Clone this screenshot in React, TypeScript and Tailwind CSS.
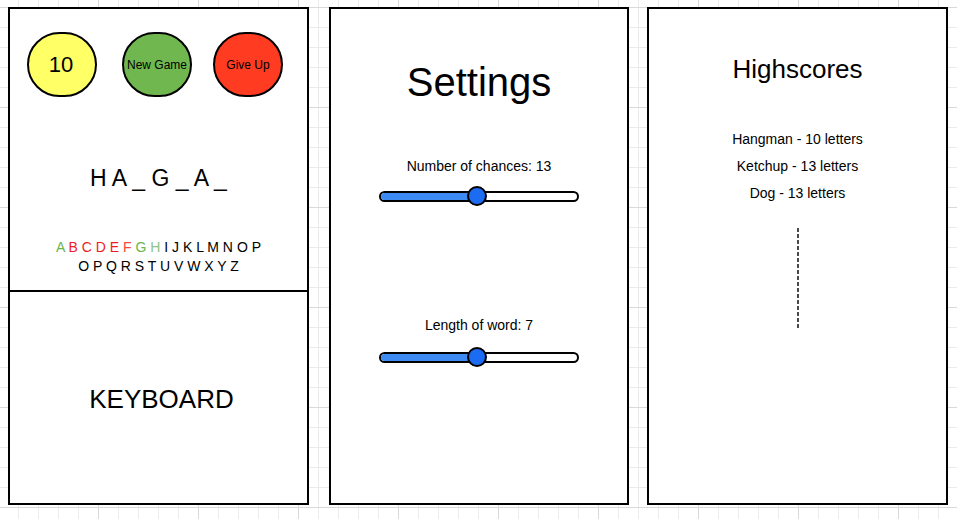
import React from 'react';

const alphabetTop = [
  { ch: 'A', color: 'text-[#6cb54b]' },
  { ch: 'B', color: 'text-[#ee1d23]' },
  { ch: 'C', color: 'text-[#ee1d23]' },
  { ch: 'D', color: 'text-[#ee1d23]' },
  { ch: 'E', color: 'text-[#ee1d23]' },
  { ch: 'F', color: 'text-[#f2473a]' },
  { ch: 'G', color: 'text-[#6cb54b]' },
  { ch: 'H', color: 'text-[#8fc28a]' },
  ...'IJKLMNOP'.split('').map((ch) => ({ ch, color: 'text-black' })),
];

const alphabetBottom = 'OPQRSTUVWXYZ'.split('');

const scores = ['Hangman - 10 letters', 'Ketchup - 13 letters', 'Dog - 13 letters'];

function Slider({ value }: { value: number }) {
  return (
    <div className="relative mx-auto h-[20px] w-[200px]">
      <div className="absolute left-0 right-0 top-[5px] h-[11px] overflow-hidden rounded-full border-2 border-black bg-white">
        <div className="h-full bg-[#3d8af3]" style={{ width: `${value}%` }} />
      </div>
      <div
        className="absolute top-0 h-[20px] w-[20px] -translate-x-1/2 rounded-full border-2 border-black bg-[#1c6cf3]"
        style={{ left: `${value}%` }}
      />
    </div>
  );
}

export default function App() {
  return (
    <div className="flex h-[519px] w-[957px] items-start overflow-hidden bg-white bg-[linear-gradient(to_right,#d9d9d9_1px,transparent_1px),linear-gradient(to_bottom,#d9d9d9_1px,transparent_1px),linear-gradient(to_right,#ebebeb_1px,transparent_1px),linear-gradient(to_bottom,#ebebeb_1px,transparent_1px)] bg-[size:100px_100px,100px_100px,20px_20px,20px_20px] bg-[position:98px_7px,98px_7px,18px_7px,18px_7px] font-['Liberation_Sans',Arial,sans-serif] text-black">
      {/* Game */}
      <div className="ml-[8px] mt-[7px] flex h-[498px] w-[301px] flex-col border-2 border-black bg-white">
        <div className="flex h-[283px] flex-col border-b-2 border-black">
          <div className="mt-[23px] flex">
            <div className="ml-[17px] flex h-[65px] w-[70px] items-center justify-center rounded-full border-2 border-black bg-[#ffff66] pr-[2px] text-[22px]">
              10
            </div>
            <div className="ml-[25px] flex h-[65px] w-[70px] items-center justify-center whitespace-nowrap rounded-full border-2 border-black bg-[#71b74f] text-[12px]">
              New Game
            </div>
            <div className="ml-[21px] flex h-[65px] w-[70px] items-center justify-center whitespace-nowrap rounded-full border-2 border-black bg-[#ff3b22] text-[12px]">
              Give Up
            </div>
          </div>
          <div className="mt-[67px] text-center text-[23px] leading-[28px]">H A _ G _ A _</div>
          <div className="mt-[46px] text-center text-[14px] leading-[19px]">
            <div>
              {alphabetTop.map((l, i) => (
                <span key={i} className={l.color}>
                  {l.ch}
                  {i < alphabetTop.length - 1 ? ' ' : ''}
                </span>
              ))}
            </div>
            <div>{alphabetBottom.join(' ')}</div>
          </div>
        </div>
        <div className="flex flex-1 items-center justify-center pl-[6px] pt-[4px] text-[26px]">KEYBOARD</div>
      </div>

      {/* Settings */}
      <div className="ml-[20px] mt-[7px] flex h-[498px] w-[300px] flex-col border-2 border-black bg-white">
        <h1 className="mt-[49px] text-center text-[40px] leading-[48px]">Settings</h1>
        <div className="mt-[50px] text-center text-[14px] leading-[20px]">Number of chances: 13</div>
        <div className="mt-[10px]">
          <Slider value={49} />
        </div>
        <div className="mt-[109px] text-center text-[14px] leading-[20px]">Length of word: 7</div>
        <div className="mt-[12px]">
          <Slider value={49} />
        </div>
      </div>

      {/* Highscores */}
      <div className="ml-[18px] mt-[7px] flex h-[498px] w-[301px] flex-col items-center border-2 border-black bg-white">
        <h2 className="mt-[44px] text-center text-[26px] leading-[32px]">Highscores</h2>
        <ul className="mt-[41px] text-center text-[14px] leading-[27px]">
          {scores.map((s) => (
            <li key={s}>{s}</li>
          ))}
        </ul>
        <svg className="mt-[21px]" width="2" height="100" viewBox="0 0 2 100">
          <line x1="1" y1="0" x2="1" y2="100" stroke="#4a4a4a" strokeWidth="2" strokeDasharray="4 2" />
        </svg>
      </div>
    </div>
  );
}
